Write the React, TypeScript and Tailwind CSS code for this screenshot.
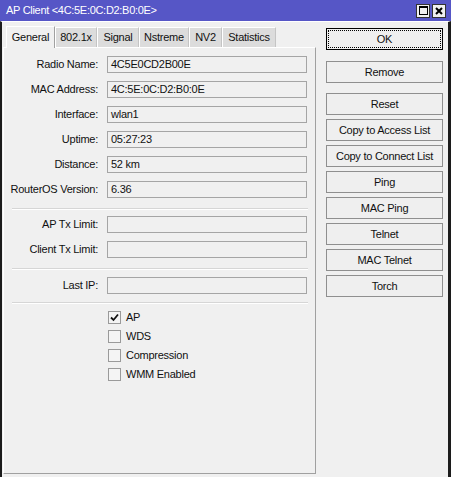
import React from "react";

const font = { fontFamily: '"Liberation Sans", Arial, sans-serif' };

function Field({ label, value }: { label: string; value?: string }) {
  return (
    <div className="flex items-center h-[17px]">
      <div className="w-[95px] text-right pr-[1px] text-[#111] whitespace-nowrap">{label}</div>
      <div className="ml-[8px] w-[200px] h-[17px] border border-[#a5a5a5] bg-[#f0f0f0] pl-[3px] flex items-center text-[#111] whitespace-nowrap overflow-hidden">
        {value}
      </div>
    </div>
  );
}

function Sep() {
  return <div className="ml-[8px] w-[296px] h-[2px] border-t border-[#d6d6d6] border-b border-b-white" />;
}

function Check({ label, checked }: { label: string; checked?: boolean }) {
  return (
    <div className="flex items-center h-[19px]">
      <div className="ml-[104px] w-[13px] h-[13px] border border-[#9a9a9a] bg-[#f4f4f4] flex items-center justify-center">
        {checked && (
          <svg width="9" height="9" viewBox="0 0 9 9">
            <path d="M1 4.5 L3.5 7 L8 1.5" stroke="#111" strokeWidth="1.8" fill="none" />
          </svg>
        )}
      </div>
      <div className="ml-[5px] text-[#111]">{label}</div>
    </div>
  );
}

function Btn({ label, ok }: { label: string; ok?: boolean }) {
  if (ok) {
    return (
      <div className="h-[22px] border border-black bg-[#efefef] p-[1px]">
        <div className="h-full border border-dotted border-black flex items-center justify-center text-[#111]">
          {label}
        </div>
      </div>
    );
  }
  return (
    <div className="h-[22px] border border-[#8f8f8f] bg-[#efefef] flex items-center justify-center text-[#111] whitespace-nowrap">
      {label}
    </div>
  );
}

export default function App() {
  const tabs = ["802.1x", "Signal", "Nstreme", "NV2", "Statistics"];
  const tabW = [42, 42, 50, 33, 54];
  return (
    <div className="w-[451px] h-[477px] bg-[#f0f0f0] text-[11px] tracking-[-0.25px] overflow-hidden flex flex-col" style={font}>
      <div className="h-[21px] bg-[#5656c6] flex items-center pl-[6px] pr-[5px] shrink-0">
        <div className="text-white text-[11px] tracking-[-0.3px] flex-1">AP Client &lt;4C:5E:0C:D2:B0:0E&gt;</div>
        <div className="flex gap-[2px]">
          <div className="w-[14px] h-[14px] bg-[#f0f0f0] border border-[#333] flex items-center justify-center">
            <div className="w-[9px] h-[9px] border border-black border-t-2" />
          </div>
          <div className="w-[14px] h-[14px] bg-[#f0f0f0] border border-[#333] flex items-center justify-center">
            <svg width="8" height="8" viewBox="0 0 8 8">
              <path d="M1 1 L7 7 M7 1 L1 7" stroke="#000" strokeWidth="2" />
            </svg>
          </div>
        </div>
      </div>
      <div className="flex-1 flex border-l-2 border-l-[#1c1c1c] border-r-[3px] border-r-[#1c1c1c] border-t border-t-white">
        <div className="ml-[1px] w-[313px] flex flex-col pt-[3px]">
          <div className="flex items-end h-[22px] pl-[3px]">
            <div className="w-[49px] h-[22px] bg-[#f0f0f0] border-t border-l border-white border-r border-r-[#a0a0a0] flex items-center justify-center relative -mb-[1px] z-10 pb-[1px] text-[#111]">
              General
            </div>
            {tabs.map((t, i) => (
              <div
                key={t}
                style={{ width: tabW[i] }}
                className="h-[20px] bg-[#dcdcdc] border-t border-l border-white border-r border-r-[#c4c4c4] flex items-center justify-center text-[#111]"
              >
                {t}
              </div>
            ))}
          </div>
          <div className="h-[427px] border-t border-l border-white border-r border-r-[#a0a0a0] border-b border-b-[#a0a0a0] flex flex-col pt-[8px]">
            <div className="flex flex-col gap-[8px]">
              <Field label="Radio Name:" value="4C5E0CD2B00E" />
              <Field label="MAC Address:" value="4C:5E:0C:D2:B0:0E" />
              <Field label="Interface:" value="wlan1" />
              <Field label="Uptime:" value="05:27:23" />
              <Field label="Distance:" value="52 km" />
              <Field label="RouterOS Version:" value="6.36" />
            </div>
            <div className="mt-[10px]"><Sep /></div>
            <div className="mt-[6px] flex flex-col gap-[8px]">
              <Field label="AP Tx Limit:" />
              <Field label="Client Tx Limit:" />
            </div>
            <div className="mt-[10px]"><Sep /></div>
            <div className="mt-[7px]">
              <Field label="Last IP:" />
            </div>
            <div className="mt-[8px]"><Sep /></div>
            <div className="mt-[4px] flex flex-col">
              <Check label="AP" checked />
              <Check label="WDS" />
              <Check label="Compression" />
              <Check label="WMM Enabled" />
            </div>
          </div>
        </div>
        <div className="ml-[10px] w-[117px] flex flex-col pt-[6px]">
          <Btn label="OK" ok />
          <div className="mt-[11px]"><Btn label="Remove" /></div>
          <div className="mt-[10px] flex flex-col gap-[4px]">
            <Btn label="Reset" />
            <Btn label="Copy to Access List" />
            <Btn label="Copy to Connect List" />
            <Btn label="Ping" />
            <Btn label="MAC Ping" />
            <Btn label="Telnet" />
            <Btn label="MAC Telnet" />
            <Btn label="Torch" />
          </div>
        </div>
      </div>
    </div>
  );
}
